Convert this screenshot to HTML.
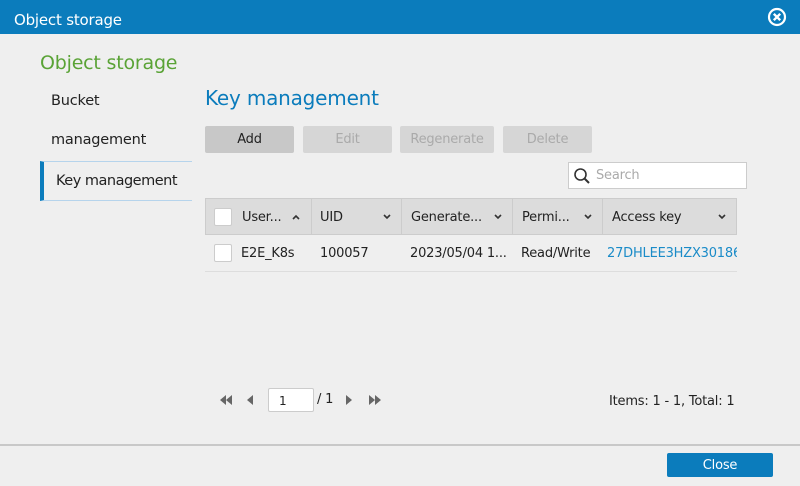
<!DOCTYPE html>
<html><head><style>
*{box-sizing:border-box;margin:0;padding:0}
body{width:800px;height:486px;background:#efefef;font-family:"DejaVu Sans","Liberation Sans",sans-serif;position:relative;overflow:hidden;font-size:13px;color:#222;letter-spacing:-0.2px}
.a{position:absolute}
.title{left:0;top:0;width:800px;height:34px;background:#0b7cbc;color:#fff;font-size:15px;line-height:40px;padding-left:14px}
.btn{height:27px;border-radius:2px;background:#d6d6d6;color:#aaa;text-align:center;line-height:28px;font-size:13px}
.th{top:198px;height:37px;border-right:1px solid #ccc}
.cb{width:18px;height:18px;background:#fff;border:1px solid #ccc;border-radius:2px}
.car{width:8px;height:6px}
</style></head><body>
<div class="a title">Object storage</div>
<svg class="a" style="left:767px;top:7px" width="20" height="20" viewBox="0 0 20 20"><circle cx="10" cy="10" r="8" fill="none" stroke="#fff" stroke-width="2.2"/><path d="M6.8 6.8L13.2 13.2M13.2 6.8L6.8 13.2" stroke="#fff" stroke-width="2.4"/></svg>
<div class="a" style="left:40px;top:52px;font-size:19px;color:#5aa336">Object storage</div>
<div class="a" style="left:51px;top:93px;font-size:14.5px">Bucket</div>
<div class="a" style="left:51px;top:132px;font-size:14.5px">management</div>
<div class="a" style="left:40px;top:161px;width:152px;height:40px;border-top:1px solid #b6d4ec;border-bottom:1px solid #b6d4ec;border-left:4px solid #0b7cbc;font-size:14.5px;line-height:39px;padding-left:12px;letter-spacing:-0.5px;white-space:nowrap">Key management</div>
<div class="a" style="left:205px;top:86px;font-size:20px;color:#0b7cbc">Key management</div>
<div class="a btn" style="left:205px;top:126px;width:89px;background:#c8c8c8;color:#222">Add</div>
<div class="a btn" style="left:303px;top:126px;width:89px">Edit</div>
<div class="a btn" style="left:400px;top:126px;width:94px">Regenerate</div>
<div class="a btn" style="left:503px;top:126px;width:89px">Delete</div>
<div class="a" style="left:568px;top:162px;width:179px;height:27px;background:#fff;border:1px solid #ccc"></div>
<svg class="a" style="left:573px;top:167px" width="18" height="18" viewBox="0 0 18 18"><circle cx="7.5" cy="7.5" r="5.5" fill="none" stroke="#333" stroke-width="1.6"/><path d="M11.5 11.5L16 16" stroke="#333" stroke-width="2"/></svg>
<div class="a" style="left:596px;top:168px;font-size:13px;color:#aaa">Search</div>
<div class="a" style="left:205px;top:198px;width:532px;height:37px;background:#dcdcdc;border:1px solid #ccc"></div>
<div class="a th" style="left:205px;width:107px"></div>
<div class="a cb" style="left:214px;top:208px"></div>
<div class="a" style="left:242px;top:210px">User...</div>
<svg class="a car" style="left:292px;top:214px" viewBox="0 0 8 6"><path d="M1 5L4 2L7 5" fill="none" stroke="#333" stroke-width="1.6"/></svg>
<div class="a th" style="left:312px;width:90px"></div>
<div class="a" style="left:320px;top:210px">UID</div>
<svg class="a car" style="left:383px;top:214px" viewBox="0 0 8 6"><path d="M1 1L4 4L7 1" fill="none" stroke="#333" stroke-width="1.6"/></svg>
<div class="a th" style="left:402px;width:111px"></div>
<div class="a" style="left:411px;top:210px">Generate...</div>
<svg class="a car" style="left:494px;top:214px" viewBox="0 0 8 6"><path d="M1 1L4 4L7 1" fill="none" stroke="#333" stroke-width="1.6"/></svg>
<div class="a th" style="left:513px;width:90px"></div>
<div class="a" style="left:522px;top:210px">Permi...</div>
<svg class="a car" style="left:584px;top:214px" viewBox="0 0 8 6"><path d="M1 1L4 4L7 1" fill="none" stroke="#333" stroke-width="1.6"/></svg>
<div class="a" style="left:612px;top:210px">Access key</div>
<svg class="a car" style="left:718px;top:214px" viewBox="0 0 8 6"><path d="M1 1L4 4L7 1" fill="none" stroke="#333" stroke-width="1.6"/></svg>
<div class="a cb" style="left:214px;top:244px"></div>
<div class="a" style="left:241px;top:246px">E2E_K8s</div>
<div class="a" style="left:320px;top:246px">100057</div>
<div class="a" style="left:410px;top:246px;width:100px;overflow:hidden;white-space:nowrap">2023/05/04 1...</div>
<div class="a" style="left:521px;top:246px">Read/Write</div>
<div class="a" style="left:607px;top:246px;width:130px;overflow:hidden;white-space:nowrap;color:#1a8bc8">27DHLEE3HZX30186</div>
<div class="a" style="left:205px;top:271px;width:532px;border-top:1px solid #ddd"></div>
<svg class="a" style="left:219px;top:394px" width="14" height="12" viewBox="0 0 14 12"><path d="M7 1L1 6L7 11ZM13 1L7 6L13 11Z" fill="#666"/></svg>
<svg class="a" style="left:246px;top:395px" width="8" height="10" viewBox="0 0 8 10"><path d="M7 0L1 5L7 10Z" fill="#666"/></svg>
<div class="a" style="left:268px;top:388px;width:46px;height:24px;background:#fff;border:1px solid #ccc;border-radius:2px;font-size:12px;padding:5px 0 0 10px">1</div>
<div class="a" style="left:317px;top:392px">/ 1</div>
<svg class="a" style="left:345px;top:395px" width="8" height="10" viewBox="0 0 8 10"><path d="M1 0L7 5L1 10Z" fill="#666"/></svg>
<svg class="a" style="left:368px;top:394px" width="14" height="12" viewBox="0 0 14 12"><path d="M1 1L7 6L1 11ZM7 1L13 6L7 11Z" fill="#666"/></svg>
<div class="a" style="left:609px;top:394px">Items: 1 - 1, Total: 1</div>
<div class="a" style="left:0;top:444px;width:800px;border-top:2px solid #c8c8c8"></div>
<div class="a" style="left:667px;top:453px;width:106px;height:24px;background:#0b7cbc;border-radius:2px;color:#fff;text-align:center;line-height:25px">Close</div>
</body></html>
